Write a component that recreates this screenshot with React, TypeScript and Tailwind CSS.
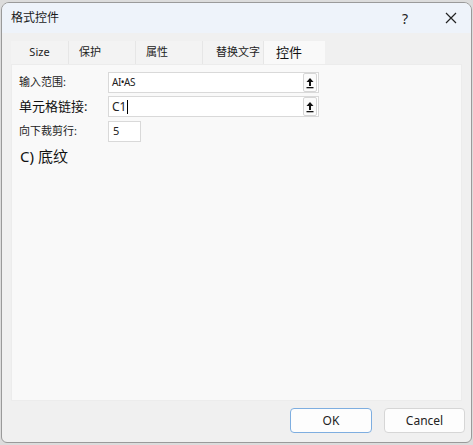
import React from "react"

const font = { fontFamily: '"Noto Sans", "Noto Sans CJK SC", sans-serif' }

function UpArrowBtn() {
  return (
    <div className="w-[14px] h-[19px] mr-[1px] border border-[#d6d6d6] rounded-[2px] bg-[#fbfbfb] flex items-center justify-center">
      <svg width="8" height="12" viewBox="0 0 8 12">
        <path d="M4 1 L7.5 5 L5 5 L5 9 L3 9 L3 5 L0.5 5 Z" fill="#111" />
        <rect x="0.5" y="10" width="7" height="1.3" fill="#111" />
      </svg>
    </div>
  )
}

const tabs = ["Size", "保护", "属性", "替换文字", "控件"]

export default function App() {
  return (
    <div className="w-[473px] h-[445px] bg-[#dcdcdc] relative overflow-hidden" style={font}>
      <div className="absolute left-[1px] top-[2px] w-[471px] h-[441px] rounded-t-[8px] rounded-b-[6px] border border-[#9a9a9a] bg-[#f0f0f0] overflow-hidden flex flex-col">
        {/* title bar */}
        <div className="h-[30px] bg-[#eef3fa] flex items-center pl-[9px] pr-[14px] shrink-0">
          <span className="text-[12px] text-[#1a1a1a]">格式控件</span>
          <span className="ml-auto text-[14px] text-[#222] mr-[37px]">?</span>
          <svg width="12" height="12" viewBox="0 0 12 12">
            <path d="M1 1 L11 11 M11 1 L1 11" stroke="#222" strokeWidth="1.2" />
          </svg>
        </div>

        {/* tabs */}
        <div className="flex pl-[9px] pt-[8px] h-[31px] shrink-0">
          {tabs.map((t, i) => {
            const sel = i === 4
            const widths = ["w-[58px]", "w-[67px]", "w-[67px]", "w-[61px]", "w-[61px]"]
            const pads = ["justify-center", "pl-[10px]", "pl-[10px]", "pl-[13px]", "pl-[12px]"]
            return (
              <div
                key={t}
                className={`${widths[i]} ${pads[i]} h-[23px] flex items-center whitespace-nowrap ${
                  sel ? "bg-[#f9f9f9] text-[13px] text-[#111]" : "bg-[#f3f3f3] text-[11px] text-[#222] border-r border-[#e6e6e6]"
                }`}
              >
                {t}
              </div>
            )
          })}
        </div>

        {/* panel */}
        <div className="mx-[9px] h-[337px] bg-[#f9f9f9] border border-[#ececec] pt-[7px] pl-[7px] shrink-0">
          <div className="flex items-center h-[21px]">
            <span className="w-[89px] text-[11px] text-[#222]">输入范围:</span>
            <div className="w-[211px] h-[21px] bg-white border border-[#d9d9d9] flex items-center pl-[3px]">
              <span className="text-[10px] text-[#222] tracking-[-0.5px]">AI•AS</span>
              <div className="ml-auto">
                <UpArrowBtn />
              </div>
            </div>
          </div>
          <div className="flex items-center h-[21px] mt-[3px]">
            <span className="w-[89px] text-[13px] text-[#111]">单元格链接:</span>
            <div className="w-[211px] h-[21px] bg-white border border-[#d9d9d9] flex items-center pl-[3px]">
              <span className="text-[12px] text-[#222]">C1</span>
              <span className="w-[1px] h-[14px] bg-black ml-[1px]" />
              <div className="ml-auto">
                <UpArrowBtn />
              </div>
            </div>
          </div>
          <div className="flex items-center h-[21px] mt-[4px]">
            <span className="w-[89px] text-[11px] text-[#222]">向下裁剪行:</span>
            <div className="w-[33px] h-[21px] bg-white border border-[#d9d9d9] flex items-center pl-[4px]">
              <span className="text-[11px] text-[#222]">5</span>
            </div>
          </div>
          <div className="mt-[3px] pl-[1px] text-[15px] text-[#111]">C) 底纹</div>
        </div>

        {/* buttons */}
        <div className="flex justify-end gap-[12px] pr-[6px] mt-[7px]">
          <button className="w-[82px] h-[25px] bg-[#fdfdfd] border border-[#7eaee0] rounded-[4px] text-[12px] text-[#222]">
            OK
          </button>
          <button className="w-[81px] h-[25px] bg-[#fdfdfd] border border-[#d6d6d6] rounded-[4px] text-[12px] text-[#222]">
            Cancel
          </button>
        </div>
      </div>
    </div>
  )
}
